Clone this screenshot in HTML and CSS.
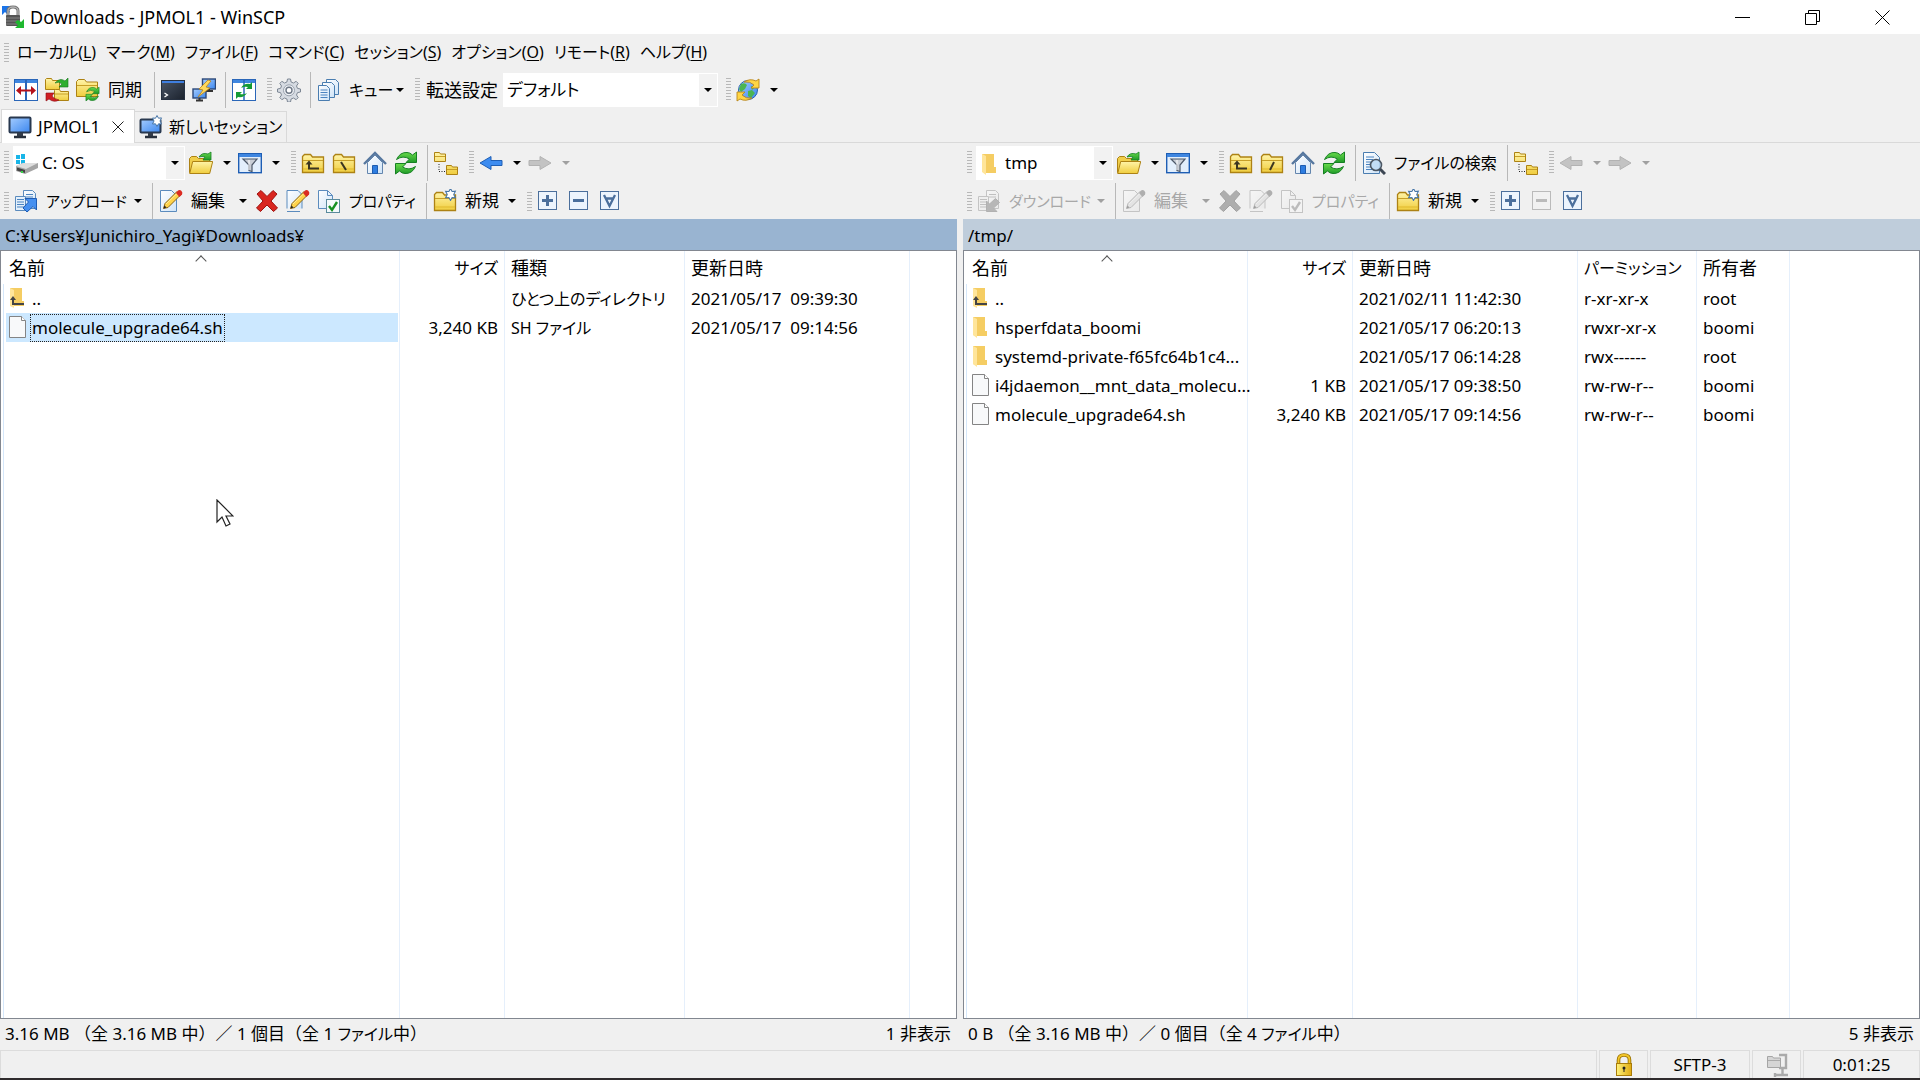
FILE: index.html
```html
<!DOCTYPE html>
<html lang="ja">

<head>
    <meta charset="UTF-8">
    <meta name="viewport" content="width=device-width, initial-scale=1.0">
    <title>Downloads - JPMOL1 - WinSCP</title>
    <link rel="stylesheet" href="styles.css">
</head>

<body>
    <!-- icon sprite -->
    <svg class="sprite" aria-hidden="true">
        <defs>
            <linearGradient id="gFolder" x1="0" y1="0" x2="0" y2="1"><stop offset="0" stop-color="#fff4a8"/><stop offset="1" stop-color="#f0cd3e"/></linearGradient>
            <linearGradient id="gBlue" x1="0" y1="0" x2="1" y2="1"><stop offset="0" stop-color="#a5cdff"/><stop offset="1" stop-color="#3b86ee"/></linearGradient>
            <linearGradient id="gPage" x1="0" y1="0" x2="1" y2="1"><stop offset="0" stop-color="#ffffff"/><stop offset="1" stop-color="#cfe4f8"/></linearGradient>
            <linearGradient id="gGreen" x1="0" y1="0" x2="0" y2="1"><stop offset="0" stop-color="#6bdc4c"/><stop offset="1" stop-color="#1e9a28"/></linearGradient>
            <linearGradient id="gDark" x1="0" y1="0" x2="1" y2="1"><stop offset="0" stop-color="#4a5566"/><stop offset="1" stop-color="#1b222d"/></linearGradient>
            <linearGradient id="gGold" x1="0" y1="0" x2="1" y2="0"><stop offset="0" stop-color="#fff27a"/><stop offset="1" stop-color="#e0aa10"/></linearGradient>
        </defs>
        <symbol id="logo" viewBox="0 0 24 24">
            <path d="M1 1h9L7 4l2 3-3 2-2-2-3 3z" fill="#1b74e8"/>
            <path d="M7 11V6q0-4 5-4t5 4v5" fill="none" stroke="#777" stroke-width="3"/>
            <path d="M7 11V6q0-4 5-4t5 4v5" fill="none" stroke="#c8c8c8" stroke-width="1"/>
            <rect x="5" y="10" width="14" height="11" rx="1" fill="#555"/>
            <path d="M5 13h14M5 16h14M5 19h14" stroke="#858585"/>
            <path d="M23 23h-9l3-3-3-3 3-2 3 2 3-3z" fill="#1fb82f"/>
        </symbol>
        <symbol id="compare" viewBox="0 0 24 24">
            <rect x=".5" y="1.500" width="23" height="21" fill="#fff" stroke="#2a66b8"/>
            <path d="M1 2h22v3H1z" fill="#3f86e0"/><path d="M12 2v20" stroke="#2a66b8" stroke-width="2"/>
            <path d="M2 12.500l5-4.500v3.500h10V8l5 4.500-5 4.500v-3.500H7V17z" fill="#b5121b"/>
        </symbol>
        <symbol id="folder" viewBox="0 0 24 24">
            <path d="M1.500 21.500v-16l2-2h6l2 2.500h11v15.500z" fill="url(#gFolder)" stroke="#ad8214" stroke-width="1.300"/>
            <path d="M2 9.500h20" stroke="#c79f27"/><path d="M2 18h20" stroke="#e0b92d"/>
        </symbol>
        <symbol id="syncfolders" viewBox="0 0 24 24">
            <path d="M.5 11.500v-10l1-1h5l1 2h7v9z" fill="url(#gFolder)" stroke="#ad8214"/>
            <path d="M9.500 22.500v-10l1-1h4l1 2h8v9z" fill="url(#gFolder)" stroke="#ad8214"/><path d="M10 16h13" stroke="#c79f27"/>
            <path d="M10 5q5-6 10-2l3-3v9h-9l3-3q-3-3-7-1z" fill="#2fae2f" stroke="#14761b" stroke-width=".6"/>
            <path d="M14 22q-5 3-10-1l-3 2v-8h8l-2 3q2 3 7 4z" fill="#cf1f24" stroke="#8b0b12" stroke-width=".6"/>
        </symbol>
        <symbol id="arrows" viewBox="0 0 24 24">
            <path d="M2.500 8.500Q6 1 13 1.500q3 0 5.500 2.500l4-3v10.500H12L15.500 8Q9 4 2.500 8.500z" fill="url(#gGreen)" stroke="#168023"/>
            <path d="M21.500 15.500Q18 23 11 22.500q-3 0-5.500-2.500l-4 3V12.500H12L8.500 16q6.500 4 13-.500z" fill="url(#gGreen)" stroke="#168023"/>
        </symbol>
        <symbol id="syncfolder" viewBox="0 0 24 24">
            <path d="M.5 18.500v-15l2-2h6l2 2.500h11v14.500z" fill="url(#gFolder)" stroke="#ad8214"/><path d="M1 7.500h20" stroke="#c79f27"/>
            <use href="#arrows" x="9" y="8" width="15" height="16"/>
        </symbol>
        <symbol id="console" viewBox="0 0 24 24">
            <rect x=".5" y="2.500" width="23" height="19" fill="url(#gDark)" stroke="#263040"/><path d="M1 3h22v2H1z" fill="#3f7fe0"/>
            <path d="M3.500 15l3 2-3 2" fill="none" stroke="#fff" stroke-width="1.300"/>
        </symbol>
        <symbol id="putty" viewBox="0 0 24 24">
            <rect x="10.500" y="1" width="13" height="10" fill="url(#gBlue)" stroke="#2b4878" stroke-width="1.400"/><path d="M14 13h7M17 11v2" stroke="#333" stroke-width="2"/>
            <rect x="1" y="11" width="13" height="9" fill="url(#gBlue)" stroke="#2b4878" stroke-width="1.400"/><path d="M4 22.500h7M7.500 20v2" stroke="#333" stroke-width="2"/>
            <path d="M16 2L7 11l4 1-5 7 12-9-4-1 5-6z" fill="#ffd95a" stroke="#b9841c" stroke-width=".8"/>
        </symbol>
        <symbol id="syncbrowse" viewBox="0 0 24 24">
            <rect x=".5" y="1.500" width="23" height="21" fill="#fff" stroke="#2a66b8"/><path d="M1 2h22v3H1z" fill="#3f86e0"/>
            <path d="M12 2v20" stroke="#2a66b8" stroke-width="1.500"/>
            <path d="M3 10q3-5 9-4l2-2v7H8l2-2q-4-1-7 1z" transform="translate(6 0)" fill="#159a36"/><path d="M21 15q-3 5-9 4l-2 2v-7h6l-2 2q4 1 7-1z" transform="translate(-6 0)" fill="#159a36"/>
        </symbol>
        <symbol id="gear" viewBox="0 0 24 24">
            <path d="M10.500 1h3l.6 3 2.400 1 2.600-1.700 2.100 2.100-1.700 2.600 1 2.400 3 .6v3l-3 .6-1 2.400 1.700 2.600-2.100 2.100-2.600-1.700-2.400 1-.6 3h-3l-.6-3-2.400-1-2.600 1.700-2.100-2.100 1.700-2.600-1-2.400-3-.6v-3l3-.6 1-2.400-1.700-2.600 2.100-2.100L7.500 5l2.400-1z" fill="#d6dbe2" stroke="#7d8794"/>
            <circle cx="12" cy="12.300" r="5.500" fill="#eef1f5" stroke="#9aa3af"/><circle cx="12" cy="12.300" r="3" fill="#fff" stroke="#6f7987" stroke-width="1.400"/>
        </symbol>
        <symbol id="queue" viewBox="0 0 24 24">
            <g fill="url(#gPage)" stroke="#4a7db0"><path d="M9.500 1.500h9l3 3v12h-12z"/><path d="M5.500 4.500h9l3 3v12h-12z"/><path d="M1.500 7.500h8l3 3v12h-11z"/></g>
            <path d="M3.500 12h7M3.500 14.500h7M3.500 17h7M3.500 19.500h7" stroke="#4a83c0"/>
        </symbol>
        <symbol id="globe" viewBox="0 0 24 24">
            <circle cx="12" cy="12" r="9.500" fill="url(#gBlue)" stroke="#2b65ae"/>
            <path d="M5 6q4-2 6 1l-2 4-4 3-2-3zM12 13l4-1 3 3-4 5-3-2zM15 8l4 1-3 3z" fill="#4bb552"/>
            <path d="M8 4q6-4 12-1l3-2v9h-8l3-3q-4-4-10-3z" fill="#ffd544" stroke="#b9861a" stroke-width=".9"/>
            <path d="M16 20q-6 4-12 1l-3 2v-9h8l-3 3q4 4 10 3z" fill="#ffd544" stroke="#b9861a" stroke-width=".9"/>
        </symbol>
        <symbol id="monitor" viewBox="0 0 24 24">
            <rect x="1.500" y="2.500" width="21" height="15" rx="1" fill="url(#gBlue)" stroke="#28384f" stroke-width="2"/>
            <path d="M9 18h6v3H9z" fill="#333c49"/><path d="M6 22h12" stroke="#28303c" stroke-width="2.500"/>
        </symbol>
        <symbol id="newmonitor" viewBox="0 0 24 24">
            <rect x="1.500" y="4.500" width="20" height="13" rx="1" fill="url(#gBlue)" stroke="#28384f" stroke-width="2"/>
            <path d="M9 18h5v3H9z" fill="#333c49"/><path d="M6 22h12" stroke="#28303c" stroke-width="2.500"/>
            <use href="#star" x="12" y="0" width="12" height="12"/>
        </symbol>
        <symbol id="star" viewBox="0 0 12 12"><path d="M6 .5l1.500 2.700 3-.3L9 6l1.500 3-3-.2L6 11.500 4.500 8.800l-3 .2L3 6 1.500 3l3 .2z" fill="#fff" stroke="#4776a8" stroke-width="1"/></symbol>
        <symbol id="drive" viewBox="0 0 24 24">
            <path d="M1 3h4v4H1zM6 2h4v5H6zM1 8h4v4H1zM6 8h4v4H6z" fill="#18b5e8"/>
            <path d="M1 14l7-3h15v5l-13 6-9-3z" fill="#a5a5a5"/><path d="M1 14l7-3h15l-12 6z" fill="#dedede"/><path d="M2 15.500l8 2.500v3l-8-2.500z" fill="#444"/><path d="M7 19v2" stroke="#37d14a" stroke-width="2"/>
        </symbol>
        <symbol id="winfolder" viewBox="0 0 24 24">
            <path d="M4 2h12v13h2v6H7z" fill="#f5cd63"/><path d="M4 2l4 2v19l-4-3z" fill="#ffe59a"/>
        </symbol>
        <symbol id="openfolder" viewBox="0 0 24 24">
            <path d="M.5 21.500v-14l2-2h5l2 2h11v14z" fill="#f0ce4a" stroke="#ad8214"/>
            <path d="M.700 22.500l3-12h20l-3 12z" fill="url(#gFolder)" stroke="#ad8214"/>
            <path d="M10 6q3-5 9-3l3-2v8h-8l2-3q-3-1-6 0z" fill="url(#gGreen)" stroke="#168023" stroke-width=".8"/>
        </symbol>
        <symbol id="filter" viewBox="0 0 24 24">
            <rect x=".7" y="2.700" width="22.600" height="19" fill="#e3effc" stroke="#1e5eb4" stroke-width="1.400"/><path d="M1 3h22v3H1z" fill="#3f86e0"/>
            <path d="M5 8h14l-5 6v6.500l-3-1V14z" fill="#c9ced6" stroke="#4d5868" stroke-width="1.200"/><path d="M11 9v10" stroke="#fff"/>
        </symbol>
        <symbol id="parent" viewBox="0 0 24 24"><use href="#folder"/><path d="M8 12v5.500h10" fill="none" stroke="#3b3520" stroke-width="2"/><path d="M4.500 13.500L8 9.500l3.500 4z" fill="#3b3520"/></symbol>
        <symbol id="root" viewBox="0 0 24 24"><use href="#folder"/><path d="M9 11l5 8" stroke="#3b3520" stroke-width="2"/></symbol>
        <symbol id="rootslash" viewBox="0 0 24 24"><use href="#folder"/><path d="M14 11l-4 8" stroke="#3b3520" stroke-width="2"/></symbol>
        <symbol id="home" viewBox="0 0 24 24">
            <path d="M4.500 22.500v-11L12 4l7.500 7.500v11z" fill="url(#gPage)" stroke="#6486ae"/><path d="M1 13L12 2l11 11" fill="none" stroke="#56779f" stroke-width="2.400"/>
            <path d="M9.500 22.500v-8h5v8z" fill="#2d7de0" stroke="#1d5cb0"/>
        </symbol>
        <symbol id="tree" viewBox="0 0 24 24">
            <path d="M.5 10.500v-9h5l1 1.500h5v7.500zM12.500 23.500v-9h5l1 1.500h5v7.500z" fill="url(#gFolder)" stroke="#ad8214"/><path d="M1 5.500h10M13 18.500h10" stroke="#c79f27"/>
            <path d="M5 13v7.500h7" fill="none" stroke="#222" stroke-dasharray="1 1.500"/>
        </symbol>
        <symbol id="back" viewBox="0 0 24 24"><path d="M1 12l11-6.500v4h11v5H12v4z" fill="#3d8cf0" stroke="#1f5fb5"/></symbol>
        <symbol id="forward" viewBox="0 0 24 24"><path d="M23 12L12 5.500v4H1v5h11v4z" fill="#3d8cf0" stroke="#1f5fb5"/></symbol>
        <symbol id="upload" viewBox="0 0 24 24">
            <path d="M9.500 1.500h9l3 3v15h-12z" fill="url(#gPage)" stroke="#5b8bbd"/><path d="M1.500 7.500h10v14h-10z" fill="#e4f0fb" stroke="#5b8bbd"/>
            <path d="M3 10.500h7M3 13h7M3 15.500h7M3 18h7M12 5.500h7M12 8h7" stroke="#4a83c0"/>
            <path d="M11 9.500h11.500V21l-3.500-3.500-6 5.500-4-4 5.500-6z" fill="#4690f0" stroke="#1e5cb4"/>
        </symbol>
        <symbol id="download" viewBox="0 0 24 24">
            <path d="M9.500 1.500h9l3 3v15h-12z" fill="url(#gPage)" stroke="#5b8bbd"/><path d="M1.500 7.500h10v14h-10z" fill="#e4f0fb" stroke="#5b8bbd"/>
            <path d="M3 10.500h7M3 13h7M3 15.500h7M3 18h7M12 5.500h7M12 8h7" stroke="#4a83c0"/>
            <path d="M9.500 22.500V12l3 3 6-5.500 4 4-6 5.500 3.500 3.500z" fill="#2b6cc0" stroke="#1e5cb4"/>
        </symbol>
        <symbol id="pencil" viewBox="0 0 24 24">
            <path d="M4.500 19.500l1.500-5L18 2.500l3.500 3.500L9 18.500z" fill="#ffd34a" stroke="#8a6514"/><path d="M7 15L18.500 4" stroke="#fff0a0"/>
            <path d="M17 4l2-2.500q2-1 3.500.5t.5 3.500L20.500 8z" fill="#db2b22"/><path d="M4.500 19.500l1-3 2 2z" fill="#222"/>
        </symbol>
        <symbol id="edit" viewBox="0 0 24 24"><path d="M1.500 1.500h11l5 5v16h-16z" fill="url(#gPage)" stroke="#5b8bbd"/><use href="#pencil"/></symbol>
        <symbol id="rename" viewBox="0 0 24 24"><path d="M1 19.500V1.500h11l4 4v14M1 22.500h13" fill="url(#gPage)" stroke="#5b8bbd"/><use href="#pencil"/></symbol>
        <symbol id="delete" viewBox="0 0 24 24"><path d="M2 5l4-3.500 6 6 6-6L22 5l-6 7 6.500 7-4 3.500L12 16l-6.500 6.500-4-3.500L8 12z" fill="#d9261f" stroke="#9e120f"/></symbol>
        <symbol id="props" viewBox="0 0 24 24">
            <path d="M1.500 1.500h9l5 5v13h-14z" fill="url(#gPage)" stroke="#5b8bbd"/><path d="M10.500 1.500v5h5" fill="none" stroke="#5b8bbd"/>
            <rect x="9.500" y="10.500" width="13" height="13" fill="#f4fafc" stroke="#5b8b9d"/><path d="M12 17l3 4 5-8" fill="none" stroke="#149022" stroke-width="2.400"/>
        </symbol>
        <symbol id="newfolder" viewBox="0 0 24 24"><use href="#folder"/><use href="#star" x="11" y="-1" width="13" height="13"/></symbol>
        <symbol id="find" viewBox="0 0 24 24">
            <path d="M1.500 1.500h11l5 5v16h-16z" fill="url(#gPage)" stroke="#4a7db0"/><path d="M4 6h8M4 8.500h7M4 11h5M4 13.500h4M4 16h5M4 18.500h7" stroke="#4a83c0"/>
            <circle cx="14" cy="14" r="5.500" fill="#bcd9f5" fill-opacity=".85" stroke="#4c5764" stroke-width="1.600"/><path d="M18 18l5 5" stroke="#3c4653" stroke-width="3"/>
        </symbol>
        <symbol id="plus" viewBox="0 0 24 24"><rect x="1.500" y="2.500" width="18" height="18" fill="#ecf4fd" stroke="#4b6f9c"/><path d="M5 11.500h11M10.500 6v11" stroke="#4b6f9c" stroke-width="3"/></symbol>
        <symbol id="minus" viewBox="0 0 24 24"><rect x="1.500" y="2.500" width="18" height="18" fill="#ecf4fd" stroke="#4b6f9c"/><path d="M5 11.500h11" stroke="#4b6f9c" stroke-width="3"/></symbol>
        <symbol id="invert" viewBox="0 0 24 24"><rect x="1.500" y="2.500" width="18" height="18" fill="#ecf4fd" stroke="#4b6f9c"/><path d="M5 6l5.500 11L16 6M7 9.500h7" fill="none" stroke="#4b6f9c" stroke-width="2.300"/></symbol>
        <symbol id="up" viewBox="0 0 18 24"><path d="M1 1h12v13h2v5H4z" fill="#f5cd63"/><path d="M1 1l4 2v18l-4-2z" fill="#ffe59a"/><path d="M4 11v6h11" fill="none" stroke="#444" stroke-width="2"/><path d="M1 13l3-4 3 4z" fill="#444"/></symbol>
        <symbol id="dir" viewBox="0 0 18 24"><path d="M1 1h12v14h2v5H4L1 19z" fill="#f5cd63"/><path d="M1 1l4 2v19l-4-3z" fill="#ffe59a"/></symbol>
        <symbol id="file" viewBox="0 0 18 24"><path d="M.5.5h12l4 4v17H.5z" fill="#f8f9fa" stroke="#848484"/><path d="M12.500.5v4h4" fill="#fff" stroke="#848484"/></symbol>
        <symbol id="lock" viewBox="0 0 24 24">
            <path d="M6.500 11V7q0-5 5.500-5t5.500 5v4" fill="none" stroke="#9a7200" stroke-width="3.600"/><path d="M6.500 11V7q0-5 5.500-5t5.500 5v4" fill="none" stroke="#f2c529" stroke-width="1.800"/>
            <rect x="4.500" y="10.500" width="15" height="12" fill="url(#gGold)" stroke="#a87b08"/><path d="M11.500 15h1v4h-1z" fill="#222"/><circle cx="12" cy="15" r="1.500" fill="#222"/>
        </symbol>
        <symbol id="zip" viewBox="0 0 24 24">
            <path d="M14 2h7v13h-7M17.500 15v6M11 22h12M10 20v4" fill="none" stroke="#aaa" stroke-width="2.400"/><path d="M2.500 14.500v-11h5l1 1.500h7v9.500z" fill="#d5d5d5" stroke="#a5a5a5"/><path d="M3 7.500h12" stroke="#aaa"/>
        </symbol>
    </svg>

    <header class="title-bar">
        <svg class="icon"><use href="#logo"/></svg>
        <h1>Downloads - JPMOL1 - WinSCP</h1>
        <div class="window-buttons">
            <button type="button" aria-label="最小化"><svg viewBox="0 0 16 16"><path d="M0 8.500h15"/></svg></button>
            <button type="button" aria-label="元に戻す"><svg viewBox="0 0 16 16"><path d="M.5 4.500h11v11H.5zM3.500 4.500v-3h11v11h-3"/></svg></button>
            <button type="button" aria-label="閉じる"><svg viewBox="0 0 16 16"><path d="M.5 1.500l14 14M14.500 1.500l-14 14"/></svg></button>
        </div>
    </header>

    <nav class="menu-bar">
        <span class="grip"></span>
        <button type="button">ローカル(<u>L</u>)</button>
        <button type="button">マーク(<u>M</u>)</button>
        <button type="button">ファイル(<u>F</u>)</button>
        <button type="button">コマンド(<u>C</u>)</button>
        <button type="button">セッション(<u>S</u>)</button>
        <button type="button">オプション(<u>O</u>)</button>
        <button type="button">リモート(<u>R</u>)</button>
        <button type="button">ヘルプ(<u>H</u>)</button>
    </nav>

    <div class="toolbar main-toolbar">
        <span class="grip"></span>
        <button type="button" class="btn" aria-label="比較"><svg class="icon"><use href="#compare"/></svg></button>
        <button type="button" class="btn" aria-label="同期化"><svg class="icon"><use href="#syncfolders"/></svg></button>
        <button type="button" class="btn btn-short"><svg class="icon"><use href="#syncfolder"/></svg>同期</button>
        <span class="sep"></span>
        <button type="button" class="btn" aria-label="ターミナル"><svg class="icon"><use href="#console"/></svg></button>
        <button type="button" class="btn" aria-label="PuTTY"><svg class="icon"><use href="#putty"/></svg></button>
        <span class="sep"></span>
        <button type="button" class="btn" aria-label="同期ブラウズ"><svg class="icon"><use href="#syncbrowse"/></svg></button>
        <span class="grip"></span>
        <button type="button" class="btn" aria-label="環境設定"><svg class="icon"><use href="#gear"/></svg></button>
        <span class="sep"></span>
        <button type="button" class="btn btn-short kana"><svg class="icon"><use href="#queue"/></svg>キュー</button>
        <button type="button" class="drop" aria-label="キューのメニュー"></button>
        <span class="grip"></span>
        <label class="preset-label" for="preset">転送設定</label>
        <div class="combo combo-preset">
            <select id="preset"><option>デフォルト</option></select>
        </div>
        <span class="grip"></span>
        <button type="button" class="btn" aria-label="更新の確認"><svg class="icon"><use href="#globe"/></svg></button>
        <button type="button" class="drop" aria-label="更新のメニュー"></button>
    </div>

    <div class="tabs">
        <div class="tab active">
            <button type="button"><svg class="icon"><use href="#monitor"/></svg>JPMOL1</button>
            <button type="button" class="tab-close" aria-label="セッションを閉じる"><svg viewBox="0 0 12 12"><path d="M.5.5l11 11M11.500.5l-11 11"/></svg></button>
        </div>
        <div class="tab">
            <button type="button" class="kana"><svg class="icon"><use href="#newmonitor"/></svg>新しいセッション</button>
        </div>
    </div>

    <main class="panes">
        <section class="pane local">
            <div class="toolbar nav-toolbar">
                <span class="grip"></span>
                <div class="combo combo-drive">
                    <svg class="icon"><use href="#drive"/></svg>
                    <select aria-label="ドライブ"><option>C: OS</option></select>
                </div>
                <button type="button" class="btn" aria-label="開く"><svg class="icon"><use href="#openfolder"/></svg></button>
                <button type="button" class="drop" aria-label="開くメニュー"></button>
                <button type="button" class="btn" aria-label="フィルタ"><svg class="icon"><use href="#filter"/></svg></button>
                <button type="button" class="drop" aria-label="フィルタメニュー"></button>
                <span class="grip"></span>
                <button type="button" class="btn" aria-label="親ディレクトリ"><svg class="icon"><use href="#parent"/></svg></button>
                <button type="button" class="btn" aria-label="ルート"><svg class="icon"><use href="#root"/></svg></button>
                <button type="button" class="btn" aria-label="ホーム"><svg class="icon"><use href="#home"/></svg></button>
                <button type="button" class="btn" aria-label="更新"><svg class="icon"><use href="#arrows"/></svg></button>
                <span class="sep"></span>
                <button type="button" class="btn" aria-label="ツリー"><svg class="icon"><use href="#tree"/></svg></button>
                <span class="grip"></span>
                <button type="button" class="btn" aria-label="戻る"><svg class="icon"><use href="#back"/></svg></button>
                <button type="button" class="drop" aria-label="戻る履歴"></button>
                <button type="button" class="btn" aria-label="進む" disabled><svg class="icon"><use href="#forward"/></svg></button>
                <button type="button" class="drop" aria-label="進む履歴" disabled></button>
            </div>
            <div class="toolbar file-toolbar">
                <span class="grip"></span>
                <button type="button" class="btn btn-transfer"><svg class="icon"><use href="#upload"/></svg>アップロード</button>
                <button type="button" class="drop" aria-label="アップロードのメニュー"></button>
                <span class="sep"></span>
                <button type="button" class="btn btn-short"><svg class="icon"><use href="#edit"/></svg>編集</button>
                <button type="button" class="drop" aria-label="編集のメニュー"></button>
                <button type="button" class="btn" aria-label="削除"><svg class="icon"><use href="#delete"/></svg></button>
                <button type="button" class="btn" aria-label="名前の変更"><svg class="icon"><use href="#rename"/></svg></button>
                <button type="button" class="btn btn-props"><svg class="icon"><use href="#props"/></svg>プロパティ</button>
                <span class="sep"></span>
                <button type="button" class="btn btn-new"><svg class="icon"><use href="#newfolder"/></svg>新規</button>
                <button type="button" class="drop" aria-label="新規のメニュー"></button>
                <span class="grip"></span>
                <button type="button" class="btn" aria-label="選択"><svg class="icon"><use href="#plus"/></svg></button>
                <button type="button" class="btn" aria-label="選択解除"><svg class="icon"><use href="#minus"/></svg></button>
                <button type="button" class="btn" aria-label="選択の反転"><svg class="icon"><use href="#invert"/></svg></button>
            </div>
            <div class="path">C:¥Users¥Junichiro_Yagi¥Downloads¥</div>
            <div class="list">
                <table>
                    <colgroup><col class="col-name-local"><col class="col-size"><col class="col-type"><col class="col-date"><col></colgroup>
                    <thead>
                        <tr><th class="sorted">名前</th><th class="num kana">サイズ</th><th>種類</th><th>更新日時</th><th></th></tr>
                    </thead>
                    <tbody>
                        <tr><td><div class="name"><svg class="file-icon"><use href="#up"/></svg><span>..</span></div></td><td></td><td class="kana">ひとつ上のディレクトリ</td><td>2021/05/17  09:39:30</td><td></td></tr>
                        <tr><td><div class="name selected"><svg class="file-icon"><use href="#file"/></svg><span>molecule_upgrade64.sh</span></div></td><td class="num">3,240 KB</td><td class="kana">SH ファイル</td><td>2021/05/17  09:14:56</td><td></td></tr>
                        <tr class="filler"><td></td><td></td><td></td><td></td><td></td></tr>
                    </tbody>
                </table>
            </div>
            <div class="summary"><span>3.16 MB （全 3.16 MB 中）／ 1 個目（全 1 <span class="tight">ファイル</span>中）</span><span>1 非表示</span></div>
        </section>

        <section class="pane remote">
            <div class="toolbar nav-toolbar">
                <span class="grip"></span>
                <div class="combo combo-dir">
                    <svg class="icon"><use href="#winfolder"/></svg>
                    <select aria-label="ディレクトリ"><option>tmp</option></select>
                </div>
                <button type="button" class="btn" aria-label="開く"><svg class="icon"><use href="#openfolder"/></svg></button>
                <button type="button" class="drop" aria-label="開くメニュー"></button>
                <button type="button" class="btn" aria-label="フィルタ"><svg class="icon"><use href="#filter"/></svg></button>
                <button type="button" class="drop" aria-label="フィルタメニュー"></button>
                <span class="grip"></span>
                <button type="button" class="btn" aria-label="親ディレクトリ"><svg class="icon"><use href="#parent"/></svg></button>
                <button type="button" class="btn" aria-label="ルート"><svg class="icon"><use href="#rootslash"/></svg></button>
                <button type="button" class="btn" aria-label="ホーム"><svg class="icon"><use href="#home"/></svg></button>
                <button type="button" class="btn" aria-label="更新"><svg class="icon"><use href="#arrows"/></svg></button>
                <span class="sep"></span>
                <button type="button" class="btn btn-find"><svg class="icon"><use href="#find"/></svg>ファイルの検索</button>
                <span class="sep"></span>
                <button type="button" class="btn" aria-label="ツリー"><svg class="icon"><use href="#tree"/></svg></button>
                <span class="grip"></span>
                <button type="button" class="btn" aria-label="戻る" disabled><svg class="icon"><use href="#back"/></svg></button>
                <button type="button" class="drop" aria-label="戻る履歴" disabled></button>
                <button type="button" class="btn" aria-label="進む" disabled><svg class="icon"><use href="#forward"/></svg></button>
                <button type="button" class="drop" aria-label="進む履歴" disabled></button>
            </div>
            <div class="toolbar file-toolbar">
                <span class="grip"></span>
                <button type="button" class="btn btn-transfer" disabled><svg class="icon"><use href="#download"/></svg>ダウンロード</button>
                <button type="button" class="drop" aria-label="ダウンロードのメニュー" disabled></button>
                <span class="sep"></span>
                <button type="button" class="btn btn-short" disabled><svg class="icon"><use href="#edit"/></svg>編集</button>
                <button type="button" class="drop" aria-label="編集のメニュー" disabled></button>
                <button type="button" class="btn" aria-label="削除" disabled><svg class="icon"><use href="#delete"/></svg></button>
                <button type="button" class="btn" aria-label="名前の変更" disabled><svg class="icon"><use href="#rename"/></svg></button>
                <button type="button" class="btn btn-props" disabled><svg class="icon"><use href="#props"/></svg>プロパティ</button>
                <span class="sep"></span>
                <button type="button" class="btn btn-new"><svg class="icon"><use href="#newfolder"/></svg>新規</button>
                <button type="button" class="drop" aria-label="新規のメニュー"></button>
                <span class="grip"></span>
                <button type="button" class="btn" aria-label="選択"><svg class="icon"><use href="#plus"/></svg></button>
                <button type="button" class="btn" aria-label="選択解除" disabled><svg class="icon"><use href="#minus"/></svg></button>
                <button type="button" class="btn" aria-label="選択の反転"><svg class="icon"><use href="#invert"/></svg></button>
            </div>
            <div class="path">/tmp/</div>
            <div class="list">
                <table>
                    <colgroup><col class="col-name-remote"><col class="col-size"><col class="col-date"><col class="col-rights"><col class="col-owner"><col></colgroup>
                    <thead>
                        <tr><th class="sorted">名前</th><th class="num kana">サイズ</th><th>更新日時</th><th class="kana">パーミッション</th><th>所有者</th><th></th></tr>
                    </thead>
                    <tbody>
                        <tr><td><div class="name"><svg class="file-icon"><use href="#up"/></svg><span>..</span></div></td><td></td><td>2021/02/11 11:42:30</td><td>r-xr-xr-x</td><td>root</td><td></td></tr>
                        <tr><td><div class="name"><svg class="file-icon"><use href="#dir"/></svg><span>hsperfdata_boomi</span></div></td><td></td><td>2021/05/17 06:20:13</td><td>rwxr-xr-x</td><td>boomi</td><td></td></tr>
                        <tr><td><div class="name"><svg class="file-icon"><use href="#dir"/></svg><span>systemd-private-f65fc64b1c4...</span></div></td><td></td><td>2021/05/17 06:14:28</td><td>rwx------</td><td>root</td><td></td></tr>
                        <tr><td><div class="name"><svg class="file-icon"><use href="#file"/></svg><span>i4jdaemon__mnt_data_molecu...</span></div></td><td class="num">1 KB</td><td>2021/05/17 09:38:50</td><td>rw-rw-r--</td><td>boomi</td><td></td></tr>
                        <tr><td><div class="name"><svg class="file-icon"><use href="#file"/></svg><span>molecule_upgrade64.sh</span></div></td><td class="num">3,240 KB</td><td>2021/05/17 09:14:56</td><td>rw-rw-r--</td><td>boomi</td><td></td></tr>
                        <tr class="filler"><td></td><td></td><td></td><td></td><td></td><td></td></tr>
                    </tbody>
                </table>
            </div>
            <div class="summary"><span>0 B （全 3.16 MB 中）／ 0 個目（全 4 <span class="tight">ファイル</span>中）</span><span>5 非表示</span></div>
        </section>
    </main>

    <footer class="status-bar">
        <div class="status-text"></div>
        <div><svg class="icon"><use href="#lock"/></svg></div>
        <div>SFTP-3</div>
        <div><svg class="icon"><use href="#zip"/></svg></div>
        <div>0:01:25</div>
    </footer>

    <svg class="cursor" viewBox="0 0 18 28"><path d="M1 1v22l5-5 4 9 4-2-4-8h7z" fill="#fff" stroke="#222" stroke-width="1.200"/></svg>
</body>

</html>
```
FILE: styles.css
```css
*,
*::before,
*::after {
    box-sizing: border-box;
}

body {
    margin: 0;
    height: 100vh;
    display: flex;
    flex-direction: column;
    background: #f0f0f0;
    border-bottom: 2px solid #2f2b2d;
    color: #000;
    font-family: "Noto Sans", "Noto Sans CJK JP", sans-serif;
    font-size: 17px;
    line-height: 24px;
    font-feature-settings: "palt";
    overflow: hidden;
}

button,
select {
    font: inherit;
    font-feature-settings: inherit;
    color: inherit;
    background: none;
    border: 0;
    border-radius: 0;
    padding: 0;
    margin: 0;
    white-space: nowrap;
}

.sprite {
    position: absolute;
    width: 0;
    height: 0;
}

.icon {
    width: 24px;
    height: 24px;
    flex: none;
}

/* title bar */
.title-bar {
    display: flex;
    align-items: center;
    height: 34px;
    flex: none;
    padding: 0 2px 0 1px;
    background: #fff;
}

.title-bar h1 {
    margin: 0 auto 0 5px;
    font-size: 18px;
    font-weight: normal;
}

.window-buttons {
    display: flex;
}

.window-buttons button {
    width: 70px;
    height: 34px;
}

.window-buttons svg {
    width: 16px;
    height: 16px;
    display: block;
    margin: 0 auto;
    fill: none;
    stroke: #000;
}

/* menu */
.menu-bar {
    display: flex;
    align-items: center;
    height: 36px;
    flex: none;
    font-size: 16px;
}

.menu-bar button {
    padding: 0 5px;
}

.menu-bar u {
    text-underline-offset: 2px;
}

/* toolbars */
.toolbar {
    display: flex;
    align-items: center;
    flex: none;
}

.main-toolbar {
    height: 39px;
}

.nav-toolbar {
    height: 40px;
}

.file-toolbar {
    height: 36px;
}

.grip {
    width: 5px;
    height: 24px;
    flex: none;
    margin: 0 3px 0 6px;
    background: repeating-linear-gradient(#b8b8b8 0 1px, transparent 1px 3px);
}

.grip:first-child {
    margin-left: 4px;
}

.menu-bar .grip,
.file-toolbar .grip {
    height: 19px;
}

.sep {
    width: 1px;
    height: 36px;
    flex: none;
    margin: 0 4px;
    background: #b8b8b8;
}

.btn {
    display: flex;
    align-items: center;
    gap: 8px;
    min-width: 31px;
    height: 32px;
    padding-left: 2px;
    flex: none;
}

.btn-short {
    width: 76px;
}

.btn-transfer {
    width: 116px;
}

.btn-props {
    width: 107px;
}

.btn-new {
    width: 72px;
}

.btn-find {
    width: 143px;
}

.kana,
.btn-find {
    font-size: 16px;
}

.btn-transfer,
.btn-props {
    font-size: 15px;
}

.btn:disabled {
    color: #a8a8a8;
}

.btn:disabled .icon {
    filter: grayscale(1);
    opacity: .4;
}

.drop {
    width: 18px;
    height: 32px;
    flex: none;
}

.file-toolbar .drop {
    width: 20px;
}

.file-toolbar .btn-new + .drop {
    width: 18px;
}

.drop::before,
.combo::after {
    content: "";
    display: block;
    width: 8px;
    margin: 0 auto;
    border: 4px solid transparent;
    border-top-color: #000;
    border-bottom: 0;
}

.drop:disabled::before {
    border-top-color: #a0a0a0;
}

.preset-label {
    width: 80px;
    padding-left: 3px;
    font-size: 18px;
    white-space: nowrap;
}

.combo {
    position: relative;
    height: 34px;
    background: #fff;
    margin: 0 2px 0 1px;
}

.combo select {
    width: 100%;
    height: 100%;
    padding-left: 28px;
    appearance: none;
    border: 1px solid #fff;
    background: linear-gradient(#f2f2f2, #f2f2f2) right / 18px 100% no-repeat;
}

.combo .icon {
    position: absolute;
    left: 2px;
    top: 6px;
}

.combo::after {
    position: absolute;
    right: 6px;
    top: 15px;
    pointer-events: none;
}

.combo-preset {
    width: 215px;
    margin-left: 0;
}

.combo-preset select {
    padding-left: 3px;
}

.combo-drive {
    width: 172px;
}

.combo-dir {
    width: 137px;
}

/* session tabs */
.tabs {
    display: flex;
    align-items: flex-end;
    height: 34px;
    flex: none;
    padding-left: 1px;
    border-bottom: 1px solid #d9d9d9;
}

.tab {
    display: flex;
    align-items: center;
    height: 31px;
    padding: 0 4px 0 4px;
    border: 1px solid #d9d9d9;
    border-width: 1px 1px 0 0;
}

.tab.active {
    height: 34px;
    width: 134px;
    margin-bottom: -1px;
    padding-left: 6px;
    background: #fff;
    border-left-width: 1px;
}

.tab button {
    display: flex;
    align-items: center;
    gap: 6px;
}

.tab .tab-close {
    margin-left: auto;
    margin-right: 6px;
}

.tab-close svg {
    width: 12px;
    height: 12px;
    stroke: #222;
}

/* panes */
.panes {
    flex: 1;
    min-height: 0;
    display: grid;
    grid-template-columns: 1fr 1fr;
    gap: 6px;
}

.pane {
    display: flex;
    flex-direction: column;
    min-width: 0;
    min-height: 0;
}

.path {
    height: 31px;
    flex: none;
    padding: 5px 5px 0;
    background: #99b4d1;
}

.remote .path {
    background: #bfcddb;
}

.list {
    flex: 1;
    min-height: 0;
    padding-left: 2px;
    border: 1px solid #828790;
    background: #fff;
}

table {
    width: 100%;
    height: 100%;
    table-layout: fixed;
    border-collapse: separate;
    border-spacing: 0;
}

.col-name-local {
    width: 397px;
}

.col-name-remote {
    width: 282px;
}

.col-size {
    width: 105px;
}

.col-type {
    width: 180px;
}

.col-date {
    width: 225px;
}

.col-rights {
    width: 119px;
}

.col-owner {
    width: 93px;
}

th,
td {
    padding: 0 6px;
    border-right: 1px solid #e5effb;
    font-weight: normal;
    text-align: left;
    white-space: pre;
}

th {
    position: relative;
    height: 33px;
    font-size: 18px;
}

th.kana {
    font-size: 16px;
}

td {
    height: 29px;
}

th:last-child,
td:last-child {
    border-right: 0;
}

td:first-child {
    padding: 0;
    border-left: 1px solid #d5e7fa;
}

.num {
    text-align: right;
}

.sorted::after {
    content: "";
    position: absolute;
    left: calc(50% - 4px);
    top: 6px;
    width: 8px;
    height: 8px;
    border: 1px solid #555;
    border-width: 1px 0 0 1px;
    transform: rotate(45deg);
}

.name {
    display: flex;
    align-items: center;
    gap: 3px;
    height: 29px;
    margin: 0 1px 0 2px;
    padding-left: 3px;
}

.name span {
    padding: 1px;
    border: 1px solid transparent;
}

.file-icon {
    width: 18px;
    height: 24px;
    flex: none;
}

.selected {
    background: #cce8ff;
}

.selected span {
    border: 1px dotted #222;
}

.filler td {
    height: auto;
}

.summary {
    display: flex;
    justify-content: space-between;
    height: 31px;
    flex: none;
    padding: 3px 6px 0 5px;
    font-feature-settings: normal;
    white-space: nowrap;
}

.tight {
    font-size: 16px;
    font-feature-settings: "palt";
}

/* status bar */
.status-bar {
    display: grid;
    grid-template-columns: 1fr 49px 100px 49px 117px;
    gap: 2px;
    height: 28px;
    flex: none;
}

.status-bar div {
    display: flex;
    align-items: center;
    justify-content: center;
    border: 1px solid #dcdcdc;
    border-bottom: 0;
}

.cursor {
    position: absolute;
    left: 216px;
    top: 499px;
    width: 18px;
    height: 28px;
}
```
